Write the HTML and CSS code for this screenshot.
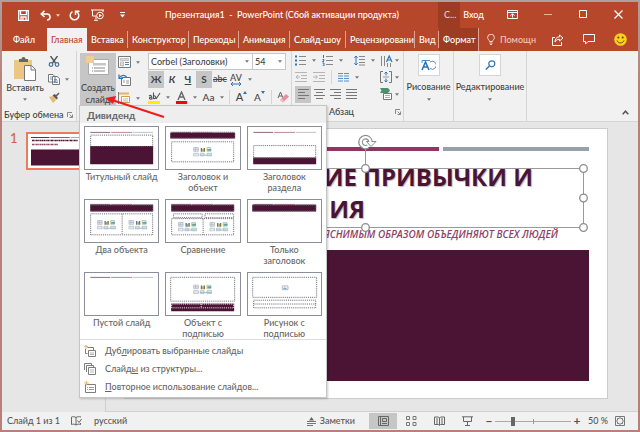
FILE: index.html
```html
<!DOCTYPE html>
<html lang="ru">
<head>
<meta charset="utf-8">
<title>Презентация1 - PowerPoint</title>
<link rel="stylesheet" href="styles.css">
</head>
<body>
<svg class="defs" aria-hidden="true">
  <symbol id="caret" viewBox="0 0 5 3"><path d="M0 0h5L2.500 3z" fill="currentColor"/></symbol>
  <symbol id="launcher" viewBox="0 0 6 6"><path d="M.5 5V.5H5M2.500 2.500l3 3M5.500 2.500v3h-3" fill="none" stroke="#888"/></symbol>
  <symbol id="objects" viewBox="0 0 20 10">
    <path d="M.5.5h5v4h-5zM2.500.5v4M.5 2.500h5M.5 6.500h5v3h-5zM7.500 6.500h4v3h-4z" fill="#e4eaf0" stroke="#a9b2bd" stroke-width=".7"/>
    <path d="M8 1h1.500v4H8z" fill="#547cb3"/><path d="M9.500 2H11v3H9.500z" fill="#d59b35"/><path d="M11 1h1.500v4H11z" fill="#71803d"/>
    <path d="M14.500.5h4v4h-4zM14.500 6.500h5v3h-5z" fill="#dcebe6" stroke="#9fb7b5" stroke-width=".7"/><path d="M15 2h4v2h-4z" fill="#67a58b"/><path d="M7 8h12v1H7z" fill="#9cbfd8"/>
  </symbol>
  <symbol id="rule" viewBox="0 0 66 1"><path d="M0 0h21v1H0z" fill="#4c1434"/><path d="M22 0h22v1H22z" fill="#913f68"/><path d="M45 0h21v1H45z" fill="#97a1aa"/></symbol>
</svg>

<div class="window">
  <header class="titlebar">
    <div class="quick">
      <button aria-label="Сохранить"><svg width="11" height="11" viewBox="0 0 11 11"><path d="M.7.7h9.600v9.600H.7zM2.500.7v4h6v-4M3 10.300V7h5v3.300M5 8v2" fill="none" stroke="#fff" stroke-width="1.300"/></svg></button>
      <button aria-label="Отменить"><svg width="11" height="11" viewBox="0 0 11 11"><path d="M4.500.8L1.300 4l3.200 3M1.500 4H7c4 0 4 6 0 6" fill="none" stroke="#fff" stroke-width="1.600"/></svg></button>
      <svg class="caret" width="4" height="3"><use href="#caret"/></svg>
      <button aria-label="Повторить"><svg width="11" height="11" viewBox="0 0 11 11"><path d="M3.500 1.700a4.300 4.300 0 1 0 4 0M6.500 5V1.200H10.500" fill="none" stroke="#fff" stroke-width="1.500"/></svg></button>
      <button aria-label="Показ слайдов"><svg width="14" height="12" viewBox="0 0 14 12"><path d="M0 1h13M1.500 1v6H5M12 1v2M5 7.500v3M3 11.300h4" fill="none" stroke="#fff"/><circle cx="9" cy="6.500" r="3.300" fill="none" stroke="#fff"/><path d="M8 4.800l3 1.700-3 1.700z" fill="#fff"/></svg></button>
      <button aria-label="Настройка панели"><svg width="5" height="6" viewBox="0 0 5 6"><path d="M0 .5h5" stroke="#fff"/><path d="M0 2.500h5L2.500 5.500z" fill="#fff"/></svg></button>
    </div>
    <div class="doc-title">Презентация1&nbsp; -&nbsp; PowerPoint (Сбой активации продукта)</div>
    <div class="context">С...</div>
    <button class="signin">Вход</button>
    <div class="wincontrols">
      <button aria-label="Параметры ленты"><svg width="11" height="9" viewBox="0 0 11 9"><path d="M.5.5h10v8H.5zM.5 2.500h10M5.500 7.500V4M3.500 5.700l2-2 2 2" fill="none" stroke="#fff"/></svg></button>
      <button aria-label="Свернуть"><svg width="9" height="9" viewBox="0 0 9 9"><path d="M0 4.500h8" stroke="#e9b29f"/></svg></button>
      <button aria-label="Развернуть"><svg width="9" height="9" viewBox="0 0 9 9"><path d="M.5.5h7v7h-7z" fill="none" stroke="#fff"/></svg></button>
      <button aria-label="Закрыть"><svg width="9" height="9" viewBox="0 0 9 9"><path d="M.5.5l8 8M8.500.5l-8 8" stroke="#fff" stroke-width="1.200"/></svg></button>
    </div>
  </header>

  <nav class="tabs">
    <a class="file" href="#">Файл</a>
    <a class="active" href="#">Главная</a>
    <a href="#">Вставка</a>
    <a href="#">Конструктор</a>
    <a href="#">Переходы</a>
    <a href="#">Анимация</a>
    <a href="#">Слайд-шоу</a>
    <a href="#">Рецензировани</a>
    <a href="#">Вид</a>
    <a class="format" href="#">Формат</a>
    <button class="tell"><svg width="8" height="11" viewBox="0 0 8 11"><path d="M2.500 7.500C2.500 6 .6 5.500.6 3.600a3.400 3.400 0 0 1 6.800 0C7.400 5.500 5.500 6 5.500 7.500zM2.500 9h3M3 10.500h2" fill="none" stroke="#f6d9cf"/></svg>Помощн</button>
    <div class="feedback">
      <button aria-label="Поделиться"><svg width="12" height="12" viewBox="0 0 12 12"><path d="M3 3.500H.5v8h9V8M7.500 1l3.500 3-3.500 3V5.300C5 5.300 4 6.500 3 8c0-3 1.500-5 4.500-5.200z" fill="none" stroke="#fff"/></svg></button>
      <button aria-label="Примечания"><svg width="12" height="11" viewBox="0 0 12 11"><path d="M.5.5h11v7H5L2.500 10V7.500h-2z" fill="none" stroke="#fff"/></svg></button>
      <button aria-label="Отзыв"><svg width="13" height="13" viewBox="0 0 13 13"><circle cx="6.500" cy="6.500" r="6.300" fill="#fcd116"/><circle cx="4.300" cy="4.500" r="1" fill="#5b4514"/><circle cx="8.700" cy="4.500" r="1" fill="#5b4514"/><path d="M3 7.500c1 3.200 6 3.200 7 0" fill="none" stroke="#5b4514"/></svg></button>
    </div>
  </nav>

  <section class="ribbon">
    <div class="group clipboard">
      <div class="tools">
        <button class="big paste">
          <svg width="22" height="24" viewBox="0 0 22 24"><path d="M0 3h18v19H0z" fill="#ecc783"/><path d="M5 2h2.500a2 2 0 0 1 4 0H14v3H5z" fill="#666"/><path d="M10.500 8.500h7l4 4v11h-11z" fill="#fff" stroke="#777"/><path d="M17 8.500V13h4.500" fill="none" stroke="#777"/></svg>
          <span>Вставить</span>
          <svg class="caret" width="4" height="3"><use href="#caret"/></svg>
        </button>
        <div class="side">
          <button aria-label="Вырезать"><svg width="12" height="11" viewBox="0 0 12 11"><path d="M2.500 0l5 7M9.500 0l-5 7" stroke="#555" stroke-width="1.400"/><circle cx="3" cy="8.500" r="1.800" fill="none" stroke="#41719c" stroke-width="1.200"/><circle cx="9" cy="8.500" r="1.800" fill="none" stroke="#41719c" stroke-width="1.200"/></svg></button>
          <button aria-label="Копировать"><svg width="12" height="11" viewBox="0 0 12 11"><path d="M.5.500h4.500l2 2v5.500H.5zM4.500 2.500h4.500l2.500 2v6H4.500z" fill="#fff" stroke="#777"/><path d="M2 3h2M2 5h2M6 5.500h3M6 7h4M6 8.500h4" stroke="#4a83bd" stroke-width=".8"/></svg><svg class="caret" width="4" height="3"><use href="#caret"/></svg></button>
          <button aria-label="Формат по образцу"><svg width="12" height="11" viewBox="0 0 12 11"><path d="M1 5l4-1 3 4-3 3z" fill="#e6b96e"/><path d="M4.500 3.500l4 4 1.500-1.500-1.300-1.500L11.500 1.500 10.500.5 8 3 6.500 2z" fill="#5a5a5a"/></svg></button>
        </div>
      </div>
      <div class="caption"><span>Буфер обмена</span><svg width="6" height="6"><use href="#launcher"/></svg></div>
    </div>

    <div class="group slides">
      <div class="tools">
        <button class="big create">
          <svg width="24" height="21" viewBox="0 0 24 21"><path d="M2.500 3.500h20v15h-20z" fill="#fff" stroke="#aaa"/><path d="M7 7h13v2.500H7z" fill="#c6c6c6"/><path d="M6 12h13M6 15h13" stroke="#888" stroke-dasharray="1 1 14"/><path d="M0 0h8v7H0z" fill="#efce94"/></svg>
          <span>Создать<br>слайд</span>
        </button>
        <div class="side">
          <button aria-label="Макет"><svg width="13" height="12" viewBox="0 0 13 12"><path d="M.5.5h12v11H.5z" fill="#fff" stroke="#777"/><path d="M2.500 2.500h8v2h-8zM2.500 6h3v4h-3z" fill="#ddd" stroke="#aaa" stroke-width=".7"/><path d="M7 6.500h4M7 8.500h4" stroke="#4a83bd"/></svg><svg class="caret" width="4" height="3"><use href="#caret"/></svg></button>
          <button aria-label="Сбросить"><svg width="13" height="12" viewBox="0 0 13 12"><path d="M3.500 3.500h9v8h-9z" fill="#fff" stroke="#777"/><path d="M5 6h2v3H5z" fill="#ccc"/><path d="M1 .5v4h4M1.200 4C4 0 8 1 9 4" fill="none" stroke="#2f75b5" stroke-width="1.200"/><path d="M8 7h3M8 9h3" stroke="#999"/></svg></button>
          <button aria-label="Раздел"><svg width="13" height="12" viewBox="0 0 13 12"><path d="M1 1.500h10" stroke="#e8b06a" stroke-width="2"/><path d="M.5 0v12" stroke="#777"/><path d="M3.500 4.500h8v6h-8z" fill="#fff" stroke="#d39a58"/><path d="M5 7h5M5 9h5" stroke="#999" stroke-width=".7"/></svg><svg class="caret" width="4" height="3"><use href="#caret"/></svg></button>
        </div>
      </div>

      <div class="menu">
        <h2>Дивиденд</h2>
        <div class="layouts">
          <button><svg viewBox="0 0 76 44"><use href="#rule" x="5" y="5" width="66" height="1"/><path d="M5 20h66v19H5z" fill="#4c1434"/><path class="dash" d="M5.500 8.500h65v12h-65z"/></svg><span>Титульный слайд</span></button>
          <button><svg viewBox="0 0 76 44"><use href="#rule" x="5" y="5" width="66" height="1"/><path d="M4 6h68v6H4z" fill="#4c1434"/><path class="dash" d="M4.500 5.500h67v6h-67zM5.500 15.500h65v21h-65z"/><use href="#objects" x="28" y="21" width="20" height="10"/></svg><span>Заголовок и<br>объект</span></button>
          <button><svg viewBox="0 0 76 44"><use href="#rule" x="5" y="5" width="66" height="1"/><path d="M5 32h66v7H5z" fill="#4c1434"/><path class="dash" d="M5.500 19.500h65v13h-65z"/></svg><span>Заголовок<br>раздела</span></button>
          <button><svg viewBox="0 0 76 44"><use href="#rule" x="5" y="4" width="66" height="1"/><path d="M5 5h66v7H5z" fill="#4c1434"/><path class="dash" d="M5.500 5.500h65v6h-65zM5.500 14.500h65v22h-65zM38.500 14.500v22"/><use href="#objects" x="12" y="21" width="20" height="10"/><use href="#objects" x="45" y="21" width="20" height="10"/></svg><span>Два объекта</span></button>
          <button><svg viewBox="0 0 76 44"><use href="#rule" x="5" y="4" width="66" height="1"/><path d="M5 5h66v7H5z" fill="#4c1434"/><path class="dash" d="M5.500 5.500h65v6h-65zM7.500 14.500h30v4h-30zM40.500 14.500h30v4h-30zM5.500 19.500h65v17h-65zM38.500 19.500v17"/><use href="#objects" x="12" y="23" width="20" height="10"/><use href="#objects" x="45" y="23" width="20" height="10"/></svg><span>Сравнение</span></button>
          <button><svg viewBox="0 0 76 44"><use href="#rule" x="5" y="4" width="66" height="1"/><path d="M4 5h67v7H4z" fill="#4c1434"/><path class="dash" d="M4.500 5.500h66v6h-66z"/></svg><span>Только<br>заголовок</span></button>
          <button><svg viewBox="0 0 76 44"><use href="#rule" x="5" y="4" width="66" height="1"/></svg><span>Пустой слайд</span></button>
          <button><svg viewBox="0 0 76 44"><path d="M5 32h66v8H5z" fill="#4c1434"/><path class="dash" d="M4.500 4.500h67v25h-67z"/><path class="dash light" d="M5.500 32.500h65v4h-65zM36.500 32.500v4"/><use href="#objects" x="28" y="12" width="20" height="10"/></svg><span>Объект с<br>подписью</span></button>
          <button><svg viewBox="0 0 76 44"><path class="dash" d="M4.500 4.500h67v21h-67zM5.500 28.500h65v8h-65zM5.500 32.500h65"/><path d="M35.500 13.500h6v4h-6z" fill="#edf3f5" stroke="#adbcc8"/><path d="M36 17l2-2 3 2z" fill="#7fa9bd"/></svg><span>Рисунок с<br>подписью</span></button>
        </div>
        <div class="actions">
          <button><svg width="12" height="12" viewBox="0 0 12 12"><path d="M3.500 2.500h6v3M1.500 4v4.500h2M4.500 5.500h7v6h-7z" fill="none" stroke="#7d7d7d"/><path d="M6 8h4M6 9.500h4" stroke="#999" stroke-width=".7"/><path d="M0 1.500h4M2 0v4" stroke="#e8bd70" stroke-width="1.200"/></svg><span>Дуб<u>л</u>ировать выбранные слайды</span></button>
          <button><svg width="12" height="12" viewBox="0 0 12 12"><path d="M.5 7V.5h7v2M2.500 9V2.500h7v2M4.500 4.500h7v7h-7z" fill="#fff" stroke="#7d7d7d"/><path d="M6 7h4M6 9h4" stroke="#999" stroke-width=".7"/></svg><span>Слайд<u>ы</u> из структуры...</span></button>
          <button><svg width="12" height="12" viewBox="0 0 12 12"><path d="M1.500 3.500h10v8h-10z" fill="#fff" stroke="#7d7d7d"/><path d="M3 6.500h1M5 6.500h5M3 8.500h1M5 8.500h5" stroke="#999"/><path d="M0 2h5M2.500 0v4.500" stroke="#e8bd70" stroke-width="1.200"/></svg><span><u>П</u>овторное использование слайдов...</span></button>
        </div>
      </div>
      <svg class="arrow" width="62" height="26" viewBox="0 0 62 26"><path d="M59 23L7 6" stroke="#ee1c1c" stroke-width="2"/><path d="M0 4l11-2-3 8z" fill="#ee1c1c"/></svg>
    </div>

    <div class="group font">
      <div class="row">
        <label class="combo family"><select aria-label="Шрифт"><option>Corbel (Заголовки)</option></select><svg class="caret" width="4" height="3"><use href="#caret"/></svg></label>
        <label class="combo size"><select aria-label="Размер шрифта"><option>54</option></select><svg class="caret" width="4" height="3"><use href="#caret"/></svg></label>
      </div>
      <div class="row letters">
        <button class="on"><b>Ж</b></button><button><b><i>К</i></b></button><button><b><u>Ч</u></b></button><button class="on"><b>S</b></button><button class="strike"><s>abc</s></button>
        <button class="spacing">AV<svg width="12" height="4" viewBox="0 0 12 4"><path d="M1 2h10M3 0L1 2l2 2M9 0l2 2-2 2" fill="none" stroke="#2f75b5"/></svg></button>
        <svg class="caret" width="4" height="3"><use href="#caret"/></svg>
      </div>
      <div class="row colors">
        <button aria-label="Цвет выделения"><svg width="13" height="13" viewBox="0 0 13 13"><path d="M0 10h12v3H0z" fill="#ffed00"/><path d="M1 5c2-1.500 3 0 3 3-3 .8-3.500-2-.5-1.700M5.500 1.500v6c3 1 3-3.500 0-2.500M8 8l4-6" fill="none" stroke="#555" stroke-width="1.100"/></svg></button>
        <svg class="caret" width="4" height="3"><use href="#caret"/></svg>
        <button aria-label="Цвет текста"><svg width="13" height="13" viewBox="0 0 13 13"><path d="M1 10h11v3H1z" fill="#f00"/><path d="M3 9l3.500-8L10 9M4.200 6h4.600" fill="none" stroke="#666" stroke-width="1.400"/></svg></button>
        <svg class="caret" width="4" height="3"><use href="#caret"/></svg>
        <button class="case">Aa</button>
        <svg class="caret" width="4" height="3"><use href="#caret"/></svg>
        <i class="split"></i>
        <button class="grow">A<svg width="4" height="3" viewBox="0 0 4 3"><path d="M0 3h4L2 0z" fill="#2f75b5"/></svg></button>
        <button class="grow less">A<svg width="4" height="3" viewBox="0 0 4 3"><path d="M0 0h4L2 3z" fill="#2f75b5"/></svg></button>
        <i class="split"></i>
        <button aria-label="Очистить формат"><svg width="12" height="12" viewBox="0 0 12 12"><path d="M1 7l2.500-6L6 7M2 5h3" fill="none" stroke="#666"/><path d="M3 9l6-6 3 2.500-6 6z" fill="#e88ca0"/><path d="M3 9l1.500-1.500 3 2.500L6 11.500z" fill="#f4b9c4"/></svg></button>
      </div>
    </div>

    <div class="group para">
      <div class="row">
        <button aria-label="Маркеры"><svg width="11" height="11" viewBox="0 0 11 11"><path d="M0 1.500h2M0 5.500h2M0 9.500h2" stroke="#2f75b5" stroke-width="2"/><path d="M4 1.500h7M4 5.500h7M4 9.500h7" stroke="#888"/></svg></button>
        <svg class="caret" width="4" height="3"><use href="#caret"/></svg>
        <button aria-label="Нумерация"><svg width="11" height="11" viewBox="0 0 11 11"><path d="M1.500 0v3M.5 4.500h1.500v1L.5 6.500H2M.5 8h1.500v3H.5" fill="none" stroke="#2f75b5"/><path d="M4 1.500h7M4 5.500h7M4 9.500h7" stroke="#888"/></svg></button>
        <svg class="caret" width="4" height="3"><use href="#caret"/></svg>
        <button class="leading" aria-label="Интервал"><svg width="11" height="11" viewBox="0 0 11 11"><path d="M2 1v9M.3 2.700L2 1l1.700 1.700M.3 8.300L2 10l1.700-1.700" fill="none" stroke="#2f75b5"/><path d="M5 1.500h6M5 4.500h6M5 7.500h6M5 10h6" stroke="#888"/></svg></button>
        <svg class="caret" width="4" height="3"><use href="#caret"/></svg>
        <button class="last" aria-label="Направление текста"><svg width="12" height="12" viewBox="0 0 12 12"><path d="M.5 1v10M3.500 1v10" stroke="#888"/><path d="M6.500 8v4M9.500 8v4" stroke="#888"/><path d="M5.500 7l2.700-6L11 7M6.500 5h3.500" fill="none" stroke="#2f75b5" stroke-width="1.200"/></svg></button>
        <svg class="caret" width="4" height="3"><use href="#caret"/></svg>
      </div>
      <div class="row">
        <button aria-label="Уменьшить отступ"><svg width="12" height="10" viewBox="0 0 12 10"><path d="M0 .5h12M6 3.500h6M6 6.500h6M0 9.500h12M5 5H1M3 3L1 5l2 2" fill="none" stroke="#b5b5b5"/></svg></button>
        <button aria-label="Увеличить отступ"><svg width="12" height="10" viewBox="0 0 12 10"><path d="M0 .5h12M6 3.500h6M6 6.500h6M0 9.500h12M0 5h4M2.500 3l2 2-2 2" fill="none" stroke="#b5b5b5"/></svg></button>
        <i class="split"></i>
        <button aria-label="Колонки"><svg width="11" height="9" viewBox="0 0 11 9"><path d="M0 .5h5M0 3h5M0 5.500h5M0 8h5M6 .5h5M6 3h5M6 5.500h5M6 8h5" stroke="#5a8fc4"/></svg></button>
        <svg class="caret" width="4" height="3"><use href="#caret"/></svg>
        <button class="last" aria-label="Выровнять текст"><svg width="12" height="12" viewBox="0 0 12 12"><path d="M3 .5H.5v11H3M9 .5h2.500v11H9" fill="none" stroke="#777"/><path d="M3 6h6" stroke="#999"/><path d="M6 1v3.500M4.500 2.500L6 1l1.500 1.500M6 7.500V11M4.500 9.500L6 11l1.500-1.500" fill="none" stroke="#2f75b5"/></svg></button>
        <svg class="caret" width="4" height="3"><use href="#caret"/></svg>
      </div>
      <div class="row aligns">
        <button class="on" aria-label="По левому краю"><svg width="11" height="10" viewBox="0 0 11 10"><path d="M0 .5h11M0 3.500h7M0 6.500h11M0 9.500h7" stroke="#777"/></svg></button>
        <button aria-label="По центру"><svg width="11" height="10" viewBox="0 0 11 10"><path d="M0 .5h11M2 3.500h7M0 6.500h11M2 9.500h7" stroke="#777"/></svg></button>
        <button aria-label="По правому краю"><svg width="11" height="10" viewBox="0 0 11 10"><path d="M0 .5h11M4 3.500h7M0 6.500h11M4 9.500h7" stroke="#777"/></svg></button>
        <button aria-label="По ширине"><svg width="11" height="10" viewBox="0 0 11 10"><path d="M0 .5h11M0 3.500h11M0 6.500h11M0 9.500h11" stroke="#777"/></svg></button>
        <button class="last" aria-label="SmartArt"><svg width="12" height="12" viewBox="0 0 12 12"><path d="M0 0h8l2 2.500L8 5H0l1.500-2.500z" fill="#44946f"/><path d="M3.500 5.500h8v6h-8z" fill="#fff" stroke="#777"/><path d="M5 7.500h5M5 9.500h5" stroke="#888" stroke-width=".7"/></svg></button>
        <svg class="caret" width="4" height="3"><use href="#caret"/></svg>
      </div>
      <div class="caption"><span>Абзац</span><svg width="6" height="6"><use href="#launcher"/></svg></div>
    </div>

    <div class="group single drawing">
      <button class="big"><span class="tile"><svg width="15" height="13" viewBox="0 0 15 13"><path d="M1 4V1.500h8M9 3a4 4 0 1 1 0 6.500" fill="none" stroke="#5a8fc4"/><path d="M1 11l3.500-8L8 11M2.500 8h4" fill="none" stroke="#2f75b5" stroke-width="1.600"/></svg></span><span>Рисование</span><svg class="caret" width="4" height="3"><use href="#caret"/></svg></button>
    </div>
    <div class="group single editing">
      <button class="big"><span class="tile"><svg width="11" height="11" viewBox="0 0 11 11"><circle cx="6.800" cy="3.800" r="3" fill="none" stroke="#2f75b5" stroke-width="1.200"/><path d="M4.500 6L.8 9.500" stroke="#2f75b5" stroke-width="1.600"/></svg></span><span>Редактирование</span><svg class="caret" width="4" height="3"><use href="#caret"/></svg></button>
    </div>
    <button class="collapse" aria-label="Свернуть ленту"><svg width="7" height="5" viewBox="0 0 7 5"><path d="M.7 4.200l2.800-3 2.800 3" fill="none" stroke="#555" stroke-width="1.500"/></svg></button>
  </section>

  <main class="workspace">
    <aside class="pane">
      <span class="number">1</span>
      <div class="thumb"><svg width="64" height="34" viewBox="0 0 64 34"><path d="M0 0h64v34H0z" fill="#fff"/><use href="#rule" x="3" y="3" width="58" height="1"/><path d="M4 6.500h46" stroke="#4c1434" stroke-width="1.600" stroke-dasharray="2 .4 1 .4"/><path d="M4 10.500h26" stroke="#8b4d6d" stroke-width="1.600" stroke-dasharray="2 .4 1 .4"/><path d="M3 15.500h58v16H3z" fill="#4c1434"/></svg></div>
    </aside>
    <div class="stage">
      <article class="slide">
        <div class="stripes"><i></i><i></i><i></i></div>
        <h1><span>ИЕ ПРИВЫЧКИ И</span><span class="second">ИЯ</span></h1>
        <p>ЯСНИМЫМ ОБРАЗОМ ОБЪЕДИНЯЮТ ВСЕХ ЛЮДЕЙ</p>
        <div class="block"></div>
        <svg class="selection" width="446" height="100" viewBox="0 0 446 100">
          <path d="M5.500 36.500h435v59H5.500zM222.500 36V15" fill="none" stroke="#9a9a9a"/>
          <g fill="#fff" stroke="#8c8c8c" stroke-width="1.300"><circle cx="222.500" cy="36.500" r="3.800"/><circle cx="440.500" cy="36.500" r="3.800"/><circle cx="440.500" cy="66" r="3.800"/><circle cx="440.500" cy="95.500" r="3.800"/><circle cx="222.500" cy="95.500" r="3.800"/></g>
          <path d="M225 14.500A5 5 0 1 1 227.500 10" fill="none" stroke="#8c8c8c" stroke-width="4.600"/>
          <path d="M223.500 9.500h9.500L228 14.500z" fill="#fff" stroke="#8c8c8c"/>
          <path d="M225 14.500A5 5 0 1 1 227.500 11" fill="none" stroke="#fff" stroke-width="2.400"/>
        </svg>
      </article>
    </div>
  </main>

  <footer class="status">
    <span class="count">Слайд 1 из 1</span>
    <button class="spell" aria-label="Правописание"><svg width="11" height="10" viewBox="0 0 11 10"><path d="M5 1.500C3.500.5 2 .5.500 1v7.500c1.500-.5 3-.5 4.500.5 1.500-1 3-1 4.500-.5V7M5 1.500V9M5 1.500C6.500.5 8 .5 10 1M6.500 4.500l1.500 2L10.500 3" fill="none" stroke="#666"/></svg></button>
    <button class="lang">русский</button>
    <button class="notes"><svg width="9" height="9" viewBox="0 0 9 9"><path d="M2 3.500L4.500 0 7 3.500z" fill="#666"/><path d="M0 4.500h9M0 6.500h9M0 8.500h6" stroke="#777"/></svg>Заметки</button>
    <button class="view on" aria-label="Обычный"><svg width="11" height="10" viewBox="0 0 11 10"><path d="M.5.5h10v9H.5zM2.500.5v9M4.500 2.500h4v3h-4zM4 7.500h5" fill="none" stroke="#666"/></svg></button>
    <button class="view" aria-label="Сортировщик"><svg width="11" height="10" viewBox="0 0 11 10"><path d="M.5.5h3v3h-3zM7 .5h3v3H7zM.5 6.500h3v3h-3zM7 6.500h3v3H7z" fill="none" stroke="#777"/></svg></button>
    <button class="view" aria-label="Чтение"><svg width="11" height="10" viewBox="0 0 11 10"><path d="M.5 1h4l1 1 1-1h4v7.500h-4l-1 1-1-1h-4zM5.500 2v7M2 3h2M2 5h2M2 7h2M7 3h2M7 5h2M7 7h2" fill="none" stroke="#666"/></svg></button>
    <button class="view" aria-label="Показ"><svg width="11" height="10" viewBox="0 0 11 10"><path d="M0 .8h11M1.500 1v4.500h8V1M5.500 5.500V9M3 9.500h5" fill="none" stroke="#666"/></svg></button>
    <div class="zoom">
      <button aria-label="Уменьшить">−</button>
      <input type="range" min="0" max="100" value="22" aria-label="Масштаб">
      <button aria-label="Увеличить">+</button>
    </div>
    <span class="percent">50 %</span>
    <button class="fit" aria-label="Вписать"><svg width="10" height="10" viewBox="0 0 10 10"><path d="M.5.5h9v9h-9z" fill="none" stroke="#777"/><path d="M5 1v2M5 7v2M1 5h2M7 5h2M2.500 4V2.500H4M7.500 4V2.500H6M2.500 6v1.500H4M7.500 6v1.500H6" fill="none" stroke="#777"/></svg></button>
  </footer>
</div>
</body>
</html>
```
FILE: styles.css
```css
* { box-sizing: border-box; }

body {
  margin: 0;
  min-height: 100vh;
  display: grid;
  grid-template-columns: minmax(0, 1fr);
  padding: 2px;
  background: linear-gradient(#a9a2a0, #b98078 20%, #b9807a);
  font-family: Lato, "Open Sans", "Noto Sans", sans-serif;
  font-size: 9px;
  font-weight: 500;
  line-height: 12px;
  color: #444;
}

button, select, input { font: inherit; color: inherit; margin: 0; }
button { display: flex; align-items: center; justify-content: center; padding: 0; border: 0; background: none; }
svg { display: block; flex: none; }
.defs { position: absolute; width: 0; height: 0; }
.caret { color: #777; }

.window { display: grid; grid-template: 26px 23px 71px 1fr 18px / minmax(0, 1fr); min-width: 0; background: #e6e6e6; }

/* title bar */
.titlebar { display: flex; align-items: center; background: #b7472a; color: #fff; }
.quick { display: flex; align-items: center; width: 163px; padding-left: 16px; }
.quick button { margin-right: 11px; }
.quick .caret { margin: 0 9px 0 -6px; color: #f3cfc4; }
.quick button:last-child { margin: 0 0 0 4px; }
.doc-title { flex: 1; white-space: nowrap; }
.context { align-self: stretch; width: 22px; padding: 7px 0 0 6px; background: #9c3c22; color: #f0cfc5; }
.signin { width: 27px; }
.wincontrols { display: flex; align-items: center; gap: 26px; margin: 0 15px 2px 20px; }

/* ribbon tabs */
.tabs { display: grid; grid-template-columns: 45px 40px 41px 61px 50px 51px 56px 69px 24px 40px 71px 1fr; align-items: center; background: #b7472a; color: #fff; }
.tabs a { height: 17px; padding: 3px 0 0 4px; overflow: hidden; border-right: 1px solid #dda390; color: #fff; text-decoration: none; white-space: nowrap; }
.tabs .file { padding-left: 11px; border: 0; }
.tabs .active { align-self: stretch; height: auto; padding-top: 6px; border: 0; background: #f1f1f1; color: #b7472a; }
.tabs .format { align-self: stretch; height: auto; padding-top: 6px; background: #9c3c22; }
.tell { justify-content: flex-start; gap: 5px; padding-left: 8px; color: #f0c9bd; }
.feedback { display: flex; align-items: center; justify-content: space-between; padding: 0 11px 0 2px; }

/* ribbon */
.ribbon { display: flex; background: #f1f1f1; border-bottom: 1px solid #d5d5d5; }
.group { position: relative; display: flex; flex-direction: column; padding: 2px 0; }
.tools { display: flex; }
.caption { display: flex; align-items: center; justify-content: space-between; height: 17px; padding-top: 3px; }
.big { flex-direction: column; justify-content: flex-start; }
.side { display: flex; flex-direction: column; }
.side button { height: 18px; gap: 5px; justify-content: flex-start; }
.row { display: flex; align-items: center; height: 17px; }
.row + .row { height: 18px; }
.split { width: 1px; height: 14px; background: #d5d5d5; }
.on { background: #c6c6c6; }

.clipboard { width: 75px; border-right: 1px solid #d5d5d5; }
.clipboard .tools { height: 53px; }
.paste { width: 46px; padding-top: 4px; gap: 1px; }
.paste .caret { margin-top: 3px; }
.clipboard .caption { padding-left: 2px; padding-right: 3px; }

.slides { width: 69px; padding-left: 3px; }
.create { width: 36px; height: 54px; padding-top: 3px; gap: 5px; background: #c6c6c6; }
.slides .side { padding-left: 2px; }

.font { width: 145px; padding-left: 2px; }
.combo { display: flex; align-items: center; height: 17px; padding-right: 3px; border: 1px solid #c6c6c6; background: #fff; }
.combo select { flex: 1; min-width: 0; padding: 0 0 0 2px; border: 0; background: none; appearance: none; }
.family { width: 105px; }
.size { width: 34px; margin-left: -1px; }
.letters button { width: 16px; height: 17px; font-size: 10px; }
.letters .strike { font-size: 9px; }
.letters .spacing { flex-direction: column; font-size: 9px; line-height: 9px; }
.letters .caret { margin-left: 4px; }
.colors { gap: 5px; }
.colors .case { width: 13px; font-size: 10px; }
.grow { width: 13px; align-items: flex-start; font-size: 11px; }
.less { font-size: 10px; }

.para { width: 113px; padding-left: 3px; border-left: 1px solid #d5d5d5; border-right: 1px solid #d5d5d5; }
.para .row { gap: 6px; padding-right: 4px; }
.para .row button { min-width: 11px; }
.para .row .leading { margin-left: 5px; }
.para .row .last { margin-left: auto; }
.para .row .last + .caret { margin-left: -3px; }
.para .row.aligns { gap: 0; }
.para .row.aligns button { width: 16px; height: 17px; }
.para .row.aligns .last { width: 12px; }
.para .row.aligns .last + .caret { margin-left: 3px; }
.para .caption { padding-left: 34px; padding-right: 2px; }

.single { border-right: 1px solid #d5d5d5; }
.drawing { width: 50px; }
.editing { width: 73px; }
.single .big { gap: 5px; padding-top: 1px; }
.tile { display: grid; place-items: center; width: 22px; height: 22px; border: 1px solid #d5d5d5; background: #fff; }
.collapse { align-self: flex-end; margin: 0 9px 6px auto; }

/* layout gallery */
.menu { position: absolute; z-index: 2; top: 54px; left: 2px; width: 248px; border: 1px solid #c6c6c6; background: #fff; box-shadow: 1px 1px 2px #0003; color: #666; }
.menu h2 { margin: 0; padding: 3px 7px 2px; background: #eee; font-size: 10px; line-height: 12px; font-weight: 700; }
.layouts { display: grid; grid-template: 68px 68px 66px / repeat(3, 1fr); gap: 5px 6px; padding: 3px 4px 1px; }
.layouts button { flex-direction: column; justify-content: flex-start; line-height: 11px; }
.layouts svg { width: 100%; height: 44px; margin-bottom: 1px; border: 1px solid #8c8f99; }
.dash { fill: none; stroke: #5f5f6b; stroke-dasharray: 1 1; }
.light { stroke: #fff; }
.actions { padding: 2px 4px 1px; border-top: 1px solid #ddd; }
.actions button { gap: 9px; height: 18px; }
.arrow { position: absolute; z-index: 3; top: 43px; left: 28px; }

/* workspace */
.workspace { display: flex; min-width: 0; }
.pane { display: flex; flex: none; width: 104px; padding: 10px 0 0 8px; border-right: 1px solid #cfcfcf; }
.number { width: 16px; font-size: 13px; line-height: 13px; color: #d9603b; }
.thumb { align-self: flex-start; border: 2px solid #ee7b5a; }
.stage { flex: 1; min-width: 0; display: grid; grid-template-columns: minmax(0, 1fr); padding: 6px 30px 12px 18px; border-bottom: 1px solid #d0d0d0; }
.slide { position: relative; display: flex; flex-direction: column; padding: 18px 18px 17px 19px; border: 1px solid #ccc; background: #fff; font-family: "Open Sans", sans-serif; }
.stripes { display: grid; grid-template-columns: repeat(3, 1fr); gap: 4px; }
.stripes i { height: 4px; background: #4c1434; }
.stripes i:nth-child(2) { background: #8e3762; }
.stripes i:nth-child(3) { background: #97a1aa; }
.slide h1 { display: flex; flex-direction: column; margin: 10px 56px 0 0; color: #4c1434; font-size: 24px; line-height: 32px; font-weight: 700; text-shadow: 1px 1px 1px #0004; white-space: nowrap; text-align: right; }
.slide .second { padding-right: 168px; }
.slide p { margin: 3px 31px 9px 0; color: #913f68; font-size: 10px; line-height: 13px; font-style: italic; font-weight: 600; text-align: right; }
.block { flex: 1; background: #4c1434; }
.selection { position: absolute; top: 3px; right: 18px; }

/* status bar */
.status { display: flex; align-items: center; background: #f1f1f1; color: #555; }
.count { width: 68px; padding-left: 5px; }
.spell { width: 12px; }
.lang { margin-left: 12px; }
.notes { gap: 4px; margin: 0 14px 0 auto; }
.view { width: 28px; height: 16px; }
.zoom { display: flex; align-items: center; gap: 3px; padding-left: 5px; }
.zoom button { width: 6px; font-size: 12px; font-weight: 700; }
.zoom input { width: 76px; height: 12px; appearance: none; background: linear-gradient(#999, #999) center / 1px 5px no-repeat, linear-gradient(#aaa, #aaa) center / 100% 1px no-repeat; }
.zoom input::-webkit-slider-thumb { appearance: none; width: 4px; height: 9px; background: #666; }
.percent { width: 34px; padding-left: 8px; white-space: nowrap; }
.fit { margin: 0 13px 0 1px; }
```
